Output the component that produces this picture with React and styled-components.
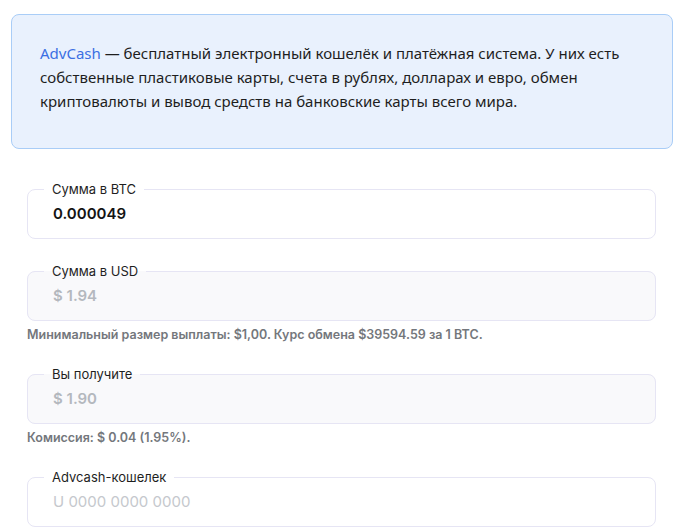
import React from "react";
import styled, { createGlobalStyle } from "styled-components";

const GlobalStyle = createGlobalStyle`
  body {
    margin: 0;
    background: #ffffff;
    font-family: Inter, "Noto Sans", sans-serif;
  }
`;

const Page = styled.div`
  padding: 14px 3px 0 11px;
`;

const InfoBox = styled.div`
  background: #e9f1fd;
  border: 1px solid #a9cdf7;
  border-radius: 8px;
  padding: 26px 28px 35px;
  font-family: "Noto Sans", sans-serif;
  font-size: 15px;
  line-height: 24px;
  color: #1e1e1e;
`;

const Link = styled.a`
  color: #3b6fe3;
  text-decoration: none;
`;

const Form = styled.div`
  padding: 32px 17px 0 16px;
  display: flex;
  flex-direction: column;
`;

const Group = styled.div`
  margin-bottom: 24px;
`;

const Field = styled.fieldset`
  margin: 0;
  min-width: 0;
  padding: 0 25px 8px;
  border: 1px solid #e6e5f4;
  border-radius: 8px;
  background: ${(p) => (p.disabled ? "#f9f9fb" : "#ffffff")};
`;

const Legend = styled.legend`
  margin-left: -9px;
  padding: 0 8px;
  font-size: 13px;
  line-height: 16px;
  color: #1f1f1f;
`;

const Value = styled.div`
  height: 33px;
  display: flex;
  align-items: center;
  font-size: 15px;
  color: ${(p) =>
    p.placeholder ? "#c5c8cd" : p.muted ? "#b4b8be" : "#141414"};
  font-weight: ${(p) => (p.placeholder ? 400 : 600)};
`;

const Hint = styled.div`
  margin-top: 6px;
  font-size: 12.5px;
  line-height: 15px;
  font-weight: 600;
  color: #74777c;
`;

export default function App() {
  return (
    <>
      <GlobalStyle />
      <Page>
        <InfoBox>
          <Link href="#">AdvCash</Link> — бесплатный электронный кошелёк и
          платёжная система. У них есть собственные пластиковые карты, счета в
          рублях, долларах и евро, обмен криптовалюты и вывод средств на
          банковские карты всего мира.
        </InfoBox>
        <Form>
          <Group>
            <Field>
              <Legend>Сумма в BTC</Legend>
              <Value>0.000049</Value>
            </Field>
          </Group>
          <Group>
            <Field disabled>
              <Legend>Сумма в USD</Legend>
              <Value muted>$ 1.94</Value>
            </Field>
            <Hint>
              Минимальный размер выплаты: $1,00. Курс обмена $39594.59 за 1 BTC.
            </Hint>
          </Group>
          <Group>
            <Field disabled>
              <Legend>Вы получите</Legend>
              <Value muted>$ 1.90</Value>
            </Field>
            <Hint>Комиссия: $ 0.04 (1.95%).</Hint>
          </Group>
          <Group>
            <Field>
              <Legend>Advcash-кошелек</Legend>
              <Value placeholder>U 0000 0000 0000</Value>
            </Field>
          </Group>
        </Form>
      </Page>
    </>
  );
}
